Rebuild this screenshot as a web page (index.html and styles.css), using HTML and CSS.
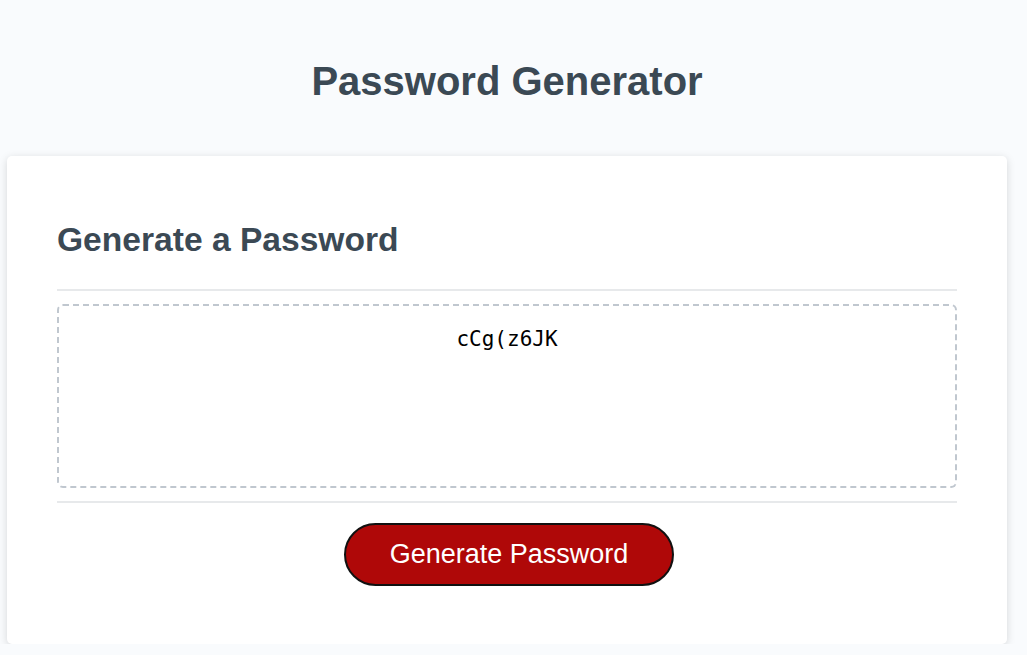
FILE: index.html
```html
<!DOCTYPE html>
<html lang="en">
<head>
<meta charset="UTF-8">
<title>Password Generator</title>
<link rel="stylesheet" href="styles.css">
</head>
<body>
<div class="wrapper">
  <header class="page-header">
    <h1 class="page-title">Password Generator</h1>
  </header>
  <div class="card">
    <div class="card-header">
      <h2 class="card-title">Generate a Password</h2>
    </div>
    <div class="card-body">
      <textarea class="password" readonly aria-label="Generated Password">cCg(z6JK</textarea>
    </div>
    <div class="card-footer">
      <button class="btn" type="button">Generate Password</button>
    </div>
  </div>
</div>
</body>
</html>
```

FILE: styles.css
```css
*, *::before, *::after {
  box-sizing: border-box;
}

html, body {
  margin: 0;
  padding: 0;
}

body {
  font-family: "Liberation Sans", Arial, sans-serif;
  background-color: #f9fbfd;
}

.wrapper {
  width: 1000px;
  margin-left: 7px;
  padding-top: 57px;
}

.page-header {
  text-align: center;
  color: hsl(206, 17%, 28%);
}

.page-title {
  margin: 0;
  font-size: 40px;
  line-height: 48px;
  font-weight: bold;
}

.card {
  margin-top: 51px;
  background-color: #fff;
  border-radius: 5px;
  box-shadow: rgba(0, 0, 0, 0.15) 0 2px 8px 0;
  color: hsl(206, 17%, 28%);
  padding: 64px 50px 58px;
}

.card-title {
  margin: 0;
  font-size: 33.6px;
  line-height: 40px;
  font-weight: bold;
}

.card-header::after {
  content: "";
  display: block;
  height: 2px;
  background: #e7e9eb;
  margin-top: 29px;
}

.card-body {
  padding: 13px 0;
}

.password {
  display: block;
  width: 100%;
  height: 184px;
  margin: 0;
  padding: 21px 15px 0;
  border: 2px dashed #c0c7cf;
  border-radius: 6px;
  font-family: "DejaVu Sans Mono", "Liberation Mono", monospace;
  font-size: 21px;
  line-height: 24px;
  color: #000;
  text-align: center;
  resize: none;
  overflow: hidden;
  outline: none;
  background: #fff;
}

.card-footer {
  text-align: center;
}

.card-footer::before {
  content: "";
  display: block;
  height: 2px;
  background: #e7e9eb;
  margin-bottom: 20px;
}

.btn {
  display: inline-block;
  width: 330px;
  height: 63px;
  margin: 0 0 0 4px;
  padding: 0;
  border: 2px solid #111;
  border-radius: 32px;
  background-color: hsl(360, 91%, 36%);
  color: #fff;
  font-family: "Liberation Sans", Arial, sans-serif;
  font-size: 27px;
  line-height: 27px;
  cursor: pointer;
}
```
